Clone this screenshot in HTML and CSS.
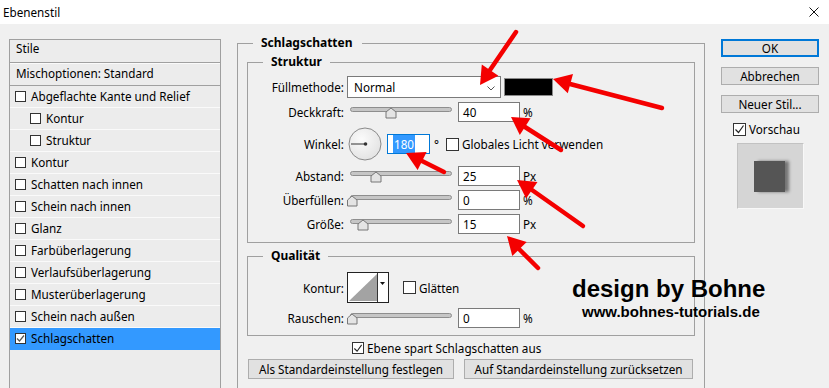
FILE: index.html
```html
<!DOCTYPE html>
<html lang="de">
<head>
<meta charset="utf-8">
<title>Ebenenstil</title>
<link rel="stylesheet" href="styles.css">
</head>
<body>
<div class="titlebar">
  <span class="title">Ebenenstil</span>
  <svg class="close" width="10" height="10" viewBox="0 0 10 10"><path d="M0.5 0.5 L9.5 9.5 M9.5 0.5 L0.5 9.5" stroke="#111" stroke-width="1" fill="none"/></svg>
</div>
<div class="main">
  <div class="styles">
    <div class="styles-head">Stile</div>
    <div class="styles-blend">Mischoptionen: Standard</div>
    <ul class="styles-list">
      <li><span class="cb"></span>Abgeflachte Kante und Relief</li>
      <li class="sub"><span class="cb"></span>Kontur</li>
      <li class="sub"><span class="cb"></span>Struktur</li>
      <li><span class="cb"></span>Kontur</li>
      <li><span class="cb"></span>Schatten nach innen</li>
      <li><span class="cb"></span>Schein nach innen</li>
      <li><span class="cb"></span>Glanz</li>
      <li><span class="cb"></span>Farbüberlagerung</li>
      <li><span class="cb"></span>Verlaufsüberlagerung</li>
      <li><span class="cb"></span>Musterüberlagerung</li>
      <li><span class="cb"></span>Schein nach außen</li>
      <li class="sel"><span class="cb"><svg width="9" height="9" viewBox="0 0 9 9"><path d="M1 4.5 L3.5 7 L8 1.5" stroke="#555" stroke-width="1.2" fill="none"/></svg></span>Schlagschatten</li>
    </ul>
  </div>

  <div class="center">
    <fieldset class="grp outer">
      <legend>Schlagschatten</legend>
      <fieldset class="grp inner struct">
        <legend>Struktur</legend>
        <div class="row r-fill">
          <span class="lbl">Füllmethode:</span>
          <div class="select"><span>Normal</span><svg class="chev" width="8" height="5" viewBox="0 0 8 5"><path d="M0.5 0.5 L4 4 L7.5 0.5" stroke="#555" fill="none"/></svg></div>
          <span class="swatch"></span>
        </div>
        <div class="row r-opacity">
          <span class="lbl">Deckkraft:</span>
          <svg class="slider" width="108" height="20" viewBox="0 0 108 20"><rect x="3.5" y="5.5" width="101" height="4" rx="2" fill="#c6c6c6" stroke="#8e8e8e"/><polygon points="44,6 49,10 49,16 39,16 39,10" fill="#e4e4e4" stroke="#777"/></svg>
          <span class="field">40</span>
          <span class="unit">%</span>
        </div>
        <div class="row r-angle">
          <span class="lbl">Winkel:</span>
          <svg class="dial" width="34" height="34" viewBox="0 0 34 34"><defs><radialGradient id="dg" cx="0.4" cy="0.35" r="0.7"><stop offset="0" stop-color="#fbfbfb"/><stop offset="1" stop-color="#e2e2e2"/></radialGradient></defs><circle cx="17" cy="17" r="16" fill="url(#dg)" stroke="#8a8a8a"/><line x1="3" y1="17" x2="17" y2="17" stroke="#333"/><circle cx="17.5" cy="17" r="1.8" fill="#333"/></svg>
          <span class="field angle"><span class="selection">180</span></span>
          <span class="deg">°</span>
          <span class="check"><span class="cb"></span>Globales Licht verwenden</span>
        </div>
        <div class="row r-dist">
          <span class="lbl">Abstand:</span>
          <svg class="slider" width="108" height="20" viewBox="0 0 108 20"><rect x="3.5" y="5.5" width="101" height="4" rx="2" fill="#c6c6c6" stroke="#8e8e8e"/><polygon points="29,6 34,10 34,16 24,16 24,10" fill="#e4e4e4" stroke="#777"/></svg>
          <span class="field">25</span>
          <span class="unit">Px</span>
        </div>
        <div class="row r-spread">
          <span class="lbl">Überfüllen:</span>
          <svg class="slider" width="108" height="20" viewBox="0 0 108 20"><rect x="3.5" y="5.5" width="101" height="4" rx="2" fill="#c6c6c6" stroke="#8e8e8e"/><polygon points="5,6 10,10 10,16 0.5,16 0.5,10" fill="#e4e4e4" stroke="#777"/></svg>
          <span class="field">0</span>
          <span class="unit">%</span>
        </div>
        <div class="row r-size">
          <span class="lbl">Größe:</span>
          <svg class="slider" width="108" height="20" viewBox="0 0 108 20"><rect x="3.5" y="5.5" width="101" height="4" rx="2" fill="#c6c6c6" stroke="#8e8e8e"/><polygon points="16,6 21,10 21,16 11,16 11,10" fill="#e4e4e4" stroke="#777"/></svg>
          <span class="field">15</span>
          <span class="unit">Px</span>
        </div>
      </fieldset>

      <fieldset class="grp inner qual">
        <legend>Qualität</legend>
        <div class="row r-contour">
          <span class="lbl">Kontur:</span>
          <svg class="contour" width="42" height="31" viewBox="0 0 42 31"><rect x="0.5" y="0.5" width="41" height="30" fill="#fff" stroke="#222"/><polygon points="2,29 30,2 30,29" fill="#a3a3a3"/><line x1="30.5" y1="1" x2="30.5" y2="30" stroke="#333"/><polygon points="33,10 38,10 35.5,13" fill="#111"/></svg>
          <span class="check glatt"><span class="cb"></span>Glätten</span>
        </div>
        <div class="row r-noise">
          <span class="lbl">Rauschen:</span>
          <svg class="slider" width="108" height="20" viewBox="0 0 108 20"><rect x="3.5" y="5.5" width="101" height="4" rx="2" fill="#c6c6c6" stroke="#8e8e8e"/><polygon points="5,6 10,10 10,16 0.5,16 0.5,10" fill="#e4e4e4" stroke="#777"/></svg>
          <span class="field">0</span>
          <span class="unit">%</span>
        </div>
      </fieldset>

      <div class="knockout"><span class="cb"><svg width="11" height="11" viewBox="0 0 11 11"><path d="M1.5 5.5 L4.5 8.5 L9.5 1.5" stroke="#222" stroke-width="1.2" fill="none"/></svg></span>Ebene spart Schlagschatten aus</div>
      <div class="defaults">
        <button class="btn b-set">Als Standardeinstellung festlegen</button>
        <button class="btn b-reset">Auf Standardeinstellung zurücksetzen</button>
      </div>
    </fieldset>
  </div>

  <div class="actions">
    <button class="btn act ok">OK</button>
    <button class="btn act">Abbrechen</button>
    <button class="btn act">Neuer Stil...</button>
    <div class="preview-check"><span class="cb"><svg width="11" height="11" viewBox="0 0 11 11"><path d="M1.5 5.5 L4.5 8.5 L9.5 1.5" stroke="#222" stroke-width="1.2" fill="none"/></svg></span>Vorschau</div>
    <div class="preview"><div class="preview-sq"></div></div>
  </div>
</div>

<div class="watermark">
  <div class="wm1">design by Bohne</div>
  <div class="wm2">www.bohnes-tutorials.de</div>
</div>

<svg class="arrows" width="829" height="388" viewBox="0 0 829 388">
  <g stroke="#f40000" stroke-width="4.5" stroke-linecap="round" fill="none">
    <line x1="516" y1="32" x2="490" y2="70"/>
    <line x1="662" y1="108" x2="570" y2="84"/>
    <line x1="561" y1="150" x2="525" y2="127"/>
    <line x1="444" y1="172" x2="422" y2="161"/>
    <line x1="583" y1="226" x2="532" y2="190"/>
    <line x1="538" y1="268" x2="519" y2="249"/>
  </g>
  <g fill="#f40000">
    <polygon points="480,85 498.4,75.7 481.8,64.5"/>
    <polygon points="553,79 573,74 567.8,93.3"/>
    <polygon points="511,117 530.6,118.3 519.8,135.1"/>
    <polygon points="406,153 426.6,152.1 417.6,169.9"/>
    <polygon points="517,180 537.5,182.1 526.1,198.5"/>
    <polygon points="507,236 526.7,241.9 512.3,255.9"/>
  </g>
</svg>
</body>
</html>
```

FILE: styles.css
```css
* { box-sizing: border-box; }
html, body { margin: 0; padding: 0; }
body {
  width: 829px;
  height: 388px;
  overflow: hidden;
  position: relative;
  background: #f0f0f0;
  color: #000;
  font: 11.7px "Noto Sans", "Liberation Sans", sans-serif;
}

/* title bar */
.titlebar {
  height: 24px;
  background: #fff;
  display: flex;
  align-items: center;
  justify-content: space-between;
  padding: 0 10px 0 3px;
}
.close { display: block; }

.main {
  display: flex;
  align-items: flex-start;
  height: 364px;
  overflow: hidden;
}

/* generic checkbox */
.cb {
  display: inline-flex;
  align-items: center;
  justify-content: center;
  width: 13px;
  height: 13px;
  background: #fff;
  border: 1px solid #333;
  flex: none;
}
.cb svg { display: block; }

/* styles list */
.styles {
  margin: 15px 0 0 9px;
  width: 212px;
  height: 370px;
  border: 1px solid #a0a0a0;
  background: #ececec;
}
.styles-head {
  height: 23px;
  line-height: 16px;
  padding-left: 6px;
  border-bottom: 1px solid #a0a0a0;
}
.styles-blend {
  height: 23px;
  line-height: 16px;
  padding: 1px 0 0 6px;
  border-top: 1px solid #fafafa;
  border-bottom: 1px solid #a0a0a0;
}
.styles-list { list-style: none; margin: 0; padding: 0; }
.styles-list li {
  height: 22px;
  line-height: 21px;
  border-bottom: 1px solid #fafafa;
  display: flex;
  align-items: center;
  padding-left: 5px;
}
.styles-list li .cb { width: 11px; height: 11px; margin-right: 5px; }
.styles-list li.sub { padding-left: 20px; }
.styles-list li.sel { background: #3399ff; border-bottom-color: #3399ff; }

/* center */
.center { margin: 11px 0 0 16px; width: 468px; }
.grp {
  margin: 0;
  min-width: 0;
  border: 1px solid #a0a0a0;
}
.grp legend {
  font-size: 12px;
  font-weight: bold;
  line-height: 16px;
  padding: 0 9px 0 8px;
}
.outer { padding: 0 9px 40px 9px; }
.outer > legend { margin-left: 6px; }
.inner { padding: 0 0 8px 0; }
.inner > legend { margin-left: 15px; padding: 0 8px; }
.struct { margin-top: 3px; }
.qual { margin-top: 5px; padding-bottom: 7px; }

.row { display: flex; align-items: center; height: 20px; margin-top: 4px; }
.lbl { width: 96px; text-align: right; flex: none; }
.r-fill { margin-top: 6px; height: 22px; }
.r-angle { margin-top: 5px; height: 34px; }
.r-dist { margin-top: 5px; }
.r-contour { margin-top: 8px; height: 31px; }
.r-noise { margin-top: 5px; }

.select {
  margin-left: 3px;
  width: 154px;
  height: 22px;
  background: #fff;
  border: 1px solid #7a7a7a;
  display: flex;
  align-items: center;
  justify-content: space-between;
  padding: 0 5px 0 6px;
}
.chev { display: block; margin-top: 2px; }
.swatch {
  margin-left: 3px;
  width: 49px;
  height: 18px;
  background: #000;
  border: 1px solid #8a8a8a;
}
.slider { display: block; margin-left: 3px; flex: none; }
.field {
  margin-left: 3px;
  width: 62px;
  height: 20px;
  background: #fff;
  border: 1px solid #7a7a7a;
  line-height: 18px;
  padding-left: 4px;
  flex: none;
}
.unit { margin-left: 3px; }
.dial { display: block; margin-left: 4px; flex: none; }
.field.angle {
  margin-left: 5px;
  width: 43px;
  border-color: #0078d7;
  padding-left: 5px;
}
.selection { background: #3399ff; color: #fff; padding: 1px 1px; }
.deg { margin-left: 4px; width: 12px; }
.check { display: flex; align-items: center; }
.check .cb { margin-right: 3px; }
.glatt { margin-left: 14px; }
.contour { display: block; margin-left: 3px; flex: none; }

.knockout {
  margin-top: 4px;
  height: 16px;
  display: flex;
  align-items: center;
  padding-left: 105px;
}
.knockout .cb { width: 12px; height: 12px; margin-right: 3px; }

.btn {
  font: inherit;
  color: #000;
  background: #e1e1e1;
  border: 1px solid #adadad;
  padding: 0;
  margin: 0;
  height: 20px;
  line-height: 18px;
}
.defaults { display: flex; margin-top: 3px; }
.b-set { margin-left: 1px; width: 206px; }
.b-reset { margin-left: 10px; width: 229px; }

/* right column */
.actions {
  margin: 15px 0 0 16px;
  width: 98px;
  display: flex;
  flex-direction: column;
  align-items: flex-start;
}
.act { width: 98px; height: 18px; line-height: 16px; margin-bottom: 10px; }
.act.ok { border: 2px solid #0078d7; line-height: 14px; }
.preview-check {
  margin: -1px 0 0 12px;
  height: 14px;
  display: flex;
  align-items: center;
}
.preview-check .cb { margin-right: 3px; }
.preview {
  margin: 7px 0 0 16px;
  width: 67px;
  height: 66px;
  background: #d5d5d5;
  border: 1px solid #c2c2c2;
  border-right-color: #f8f8f8;
  border-bottom-color: #f8f8f8;
  padding: 17px 0 0 16px;
}
.preview-sq {
  width: 31px;
  height: 31px;
  background: #555;
  box-shadow: 4px 0 3px rgba(0, 0, 0, 0.45);
}

/* overlay */
.watermark {
  position: absolute;
  left: 572px;
  top: 276px;
  font-family: "Liberation Sans", Arial, sans-serif;
  font-weight: bold;
  color: #000;
}
.wm1 { font-size: 24px; line-height: 26px; }
.wm2 { font-size: 15px; line-height: 17px; margin: 1px 0 0 10px; }
.arrows { position: absolute; left: 0; top: 0; pointer-events: none; }
```
